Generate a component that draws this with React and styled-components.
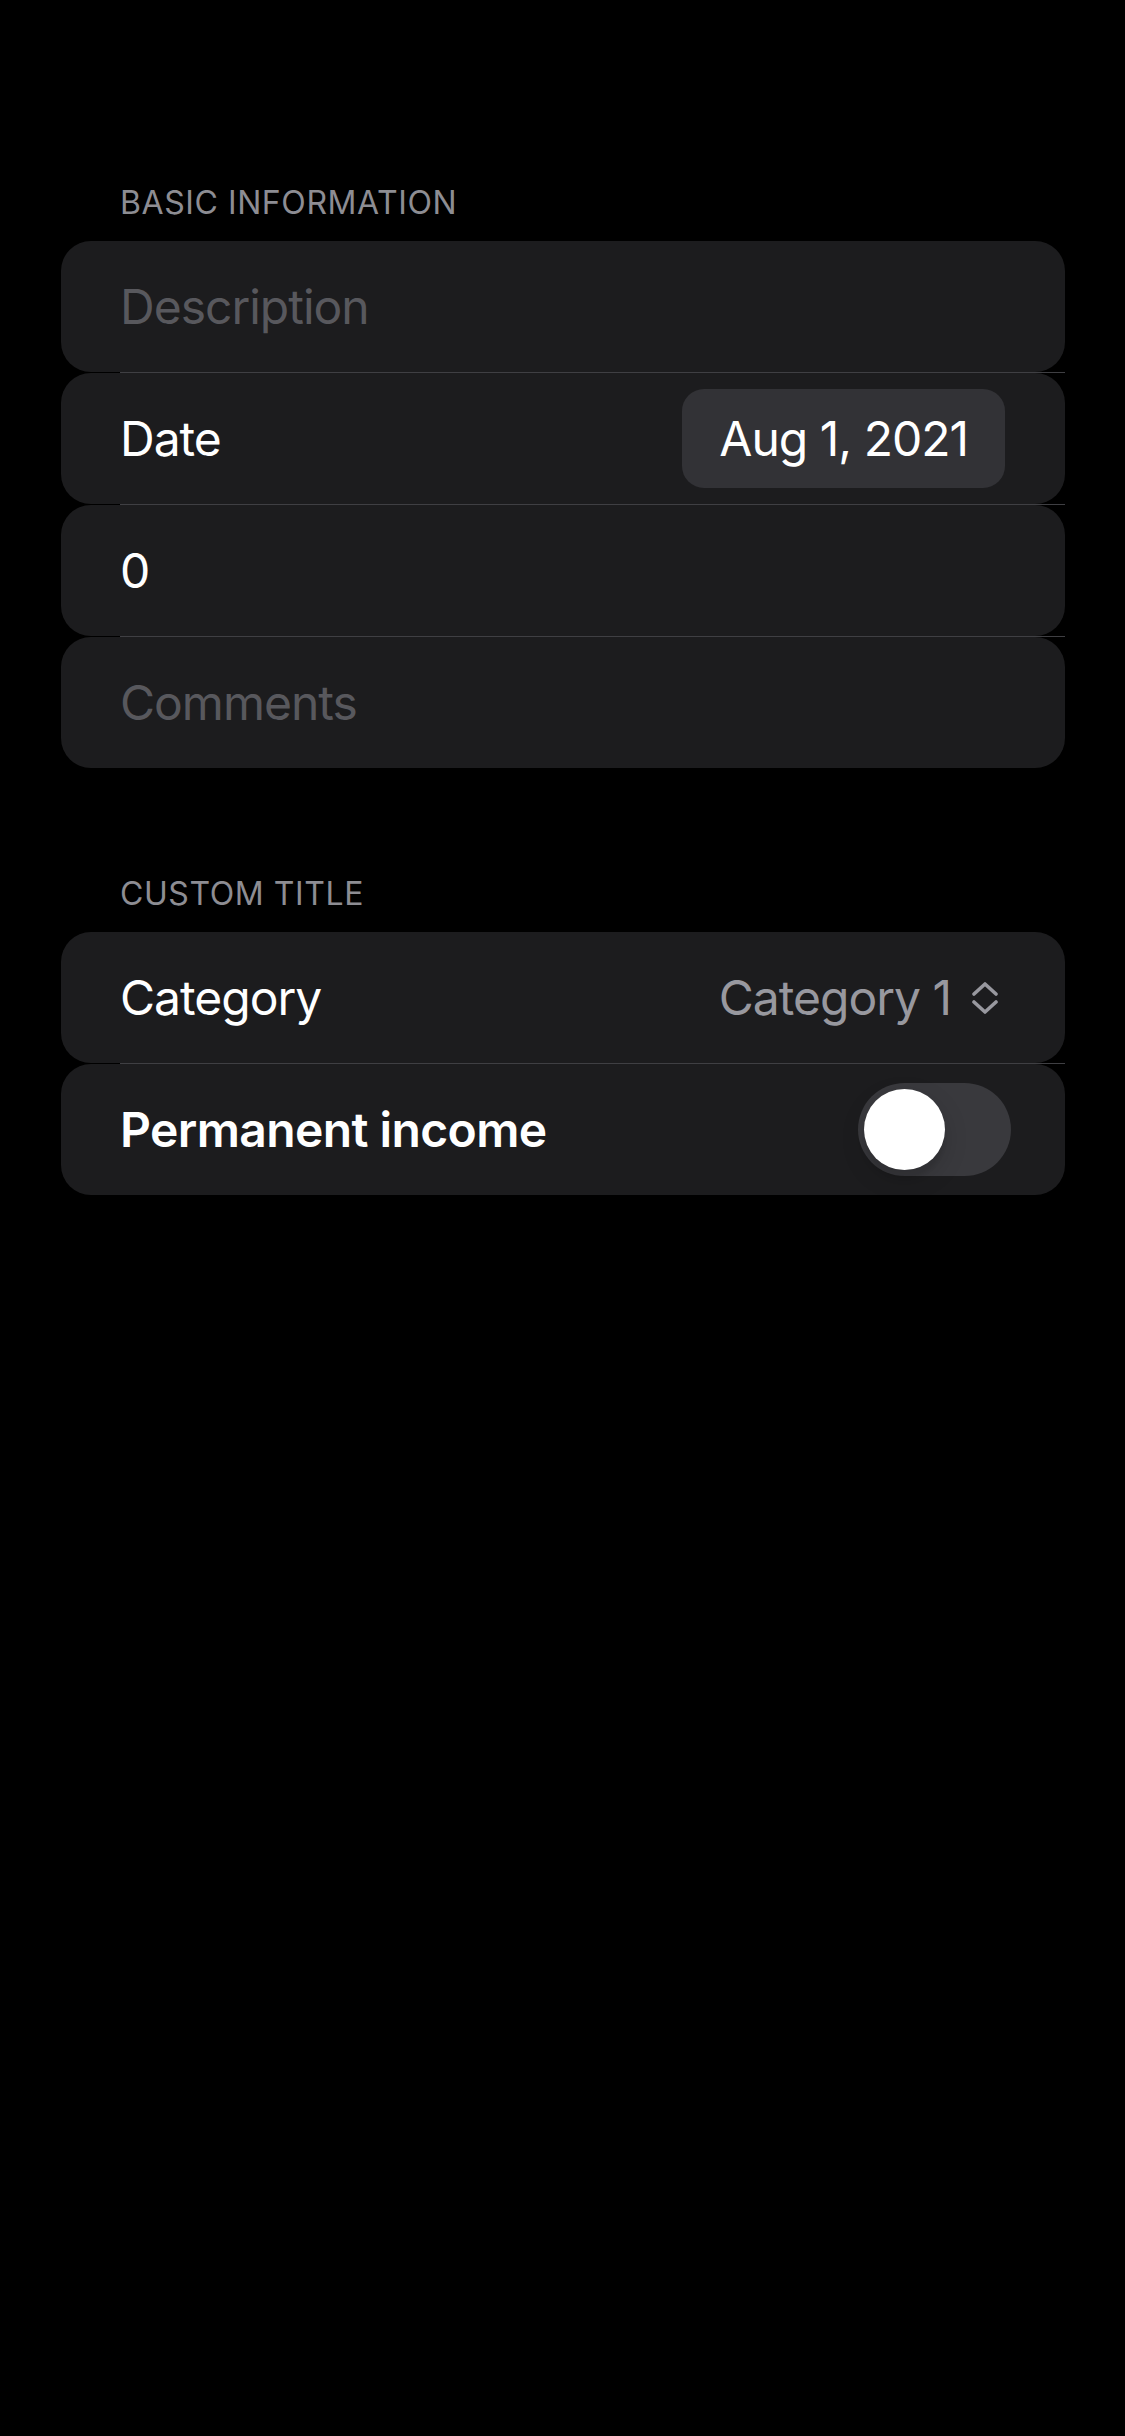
import React from "react";
import styled, { createGlobalStyle } from "styled-components";

const GlobalStyle = createGlobalStyle`
  html, body {
    margin: 0;
    padding: 0;
    background: #000000;
  }
  body {
    font-family: "Inter", "Roboto", "Liberation Sans", sans-serif;
    -webkit-font-smoothing: antialiased;
  }
`;

const Page = styled.div`
  min-height: 2436px;
  background: #000000;
  padding: 183px 60px 0 61px;
  box-sizing: border-box;
`;

const Section = styled.section`
  display: flex;
  flex-direction: column;
  margin-bottom: 106px;
`;

const SectionHeader = styled.div`
  padding-left: 59px;
  margin-bottom: 18px;
  font-size: 32px;
  line-height: 40px;
  letter-spacing: 0.58px;
  color: #8d8d93;
  text-transform: uppercase;
`;

const Card = styled.div`
  display: flex;
  flex-direction: column;
`;

const Row = styled.div`
  height: 131px;
  box-sizing: border-box;
  padding: 0 60px 0 59px;
  display: flex;
  align-items: center;
  justify-content: space-between;
  background: #1c1c1e;
  border-radius: 30px;
`;

const Separator = styled.div`
  height: 1px;
  margin-left: 59px;
  background: #3f3f43;
`;

const Label = styled.span`
  font-size: 48px;
  line-height: 1.2;
  letter-spacing: ${(p) => (p.$bold ? "-0.6px" : "-1px")};
  font-weight: ${(p) => (p.$bold ? 600 : 400)};
  color: ${(p) => (p.$placeholder ? "#58585d" : "#ffffff")};
`;

const DatePill = styled.div`
  height: 99px;
  padding: 0 37px;
  display: flex;
  align-items: center;
  border-radius: 22px;
  background: #323236;
  font-size: 48px;
  letter-spacing: -1px;
  color: #ffffff;
`;

const Picker = styled.div`
  display: flex;
  align-items: center;
  gap: 20px;
  margin-right: 6px;
  font-size: 48px;
  letter-spacing: -1px;
  color: #98989f;
`;

const Track = styled.div`
  width: 153px;
  height: 93px;
  box-sizing: border-box;
  padding: 0 6px;
  margin-right: -6px;
  display: flex;
  align-items: center;
  border-radius: 47px;
  background: #39393d;
`;

const Knob = styled.div`
  width: 81px;
  height: 81px;
  border-radius: 50%;
  background: #ffffff;
  box-shadow: 0 9px 24px rgba(0, 0, 0, 0.15), 0 9px 3px rgba(0, 0, 0, 0.06);
`;

const UpDown = () => (
  <svg width="28" height="32" viewBox="0 0 28 32" fill="none">
    <path
      d="M3 12 L14 2 L25 12 M3 20 L14 30 L25 20"
      stroke="#98989f"
      strokeWidth="3.6"
      strokeLinecap="round"
      strokeLinejoin="round"
    />
  </svg>
);

export default function App() {
  return (
    <>
      <GlobalStyle />
      <Page>
        <Section>
          <SectionHeader>Basic Information</SectionHeader>
          <Card>
            <Row>
              <Label $placeholder>Description</Label>
            </Row>
            <Separator />
            <Row>
              <Label>Date</Label>
              <DatePill>Aug 1, 2021</DatePill>
            </Row>
            <Separator />
            <Row>
              <Label>0</Label>
            </Row>
            <Separator />
            <Row>
              <Label $placeholder>Comments</Label>
            </Row>
          </Card>
        </Section>

        <Section>
          <SectionHeader>Custom Title</SectionHeader>
          <Card>
            <Row>
              <Label>Category</Label>
              <Picker>
                Category 1
                <UpDown />
              </Picker>
            </Row>
            <Separator />
            <Row>
              <Label $bold>Permanent income</Label>
              <Track>
                <Knob />
              </Track>
            </Row>
          </Card>
        </Section>
      </Page>
    </>
  );
}
